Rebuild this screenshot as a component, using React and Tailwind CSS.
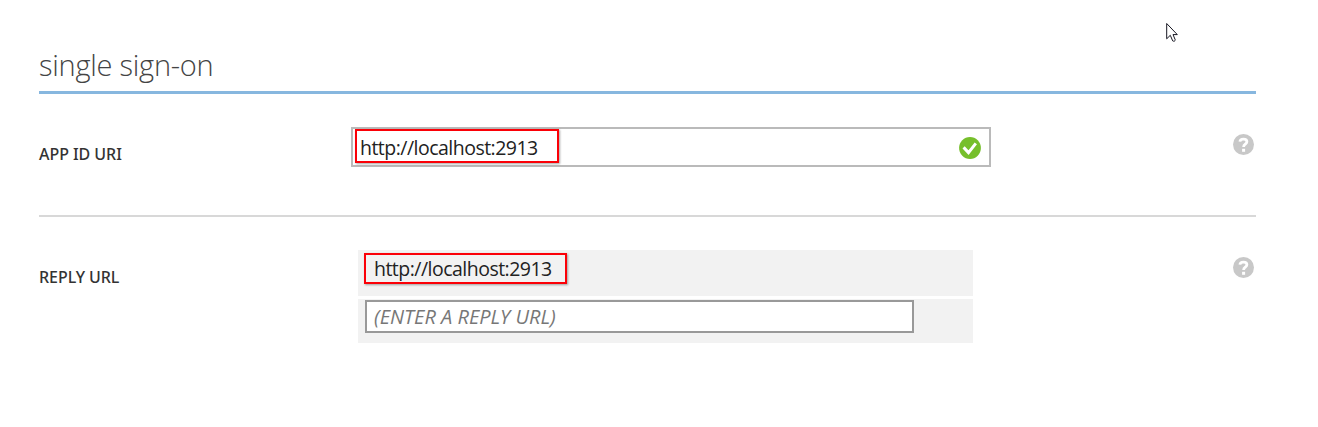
import React from "react";

function HelpIcon() {
  return (
    <svg className="block h-[21px] w-[21px]" viewBox="0 0 21 21" aria-label="Help">
      <circle cx="10.5" cy="10.5" r="10.5" fill="#c8c8c8" />
      <path d="M6.9 7.7C7.1 5.9 8.5 5.1 10.4 5.1c2.1 0 3.5 1 3.5 2.7 0 2.5-3.3 2.4-3.3 5.2" fill="none" stroke="#fff" strokeWidth="2.8" />
      <rect x="9.1" y="14.8" width="3" height="3" fill="#fff" />
    </svg>
  );
}

function CheckIcon() {
  return (
    <svg className="block h-[22px] w-[22px]" viewBox="0 0 22 22" aria-label="Valid">
      <circle cx="11" cy="11" r="10.9" fill="#76bf2b" />
      <path d="M4.6 10.4l4.9 5.2 7.3-9.2" fill="none" stroke="#fff" strokeWidth="3" />
    </svg>
  );
}

function Pointer() {
  return (
    <svg className="absolute left-[1166px] top-[22px] h-[21px] w-[14px]" viewBox="0 0 14 21" aria-hidden="true">
      <path d="M.7 1.5v15.3l3.6-3.5 2.4 5.6c1.1.8 2.7.1 2.5-1.2l-2.2-5.1h4.3z" fill="#fff" stroke="#171722" strokeWidth="1" />
    </svg>
  );
}

function Label({ children }) {
  return <div className="h-5 whitespace-nowrap font-['Noto_Sans'] text-[16px] leading-5 font-medium tracking-[-0.05px] text-[#333]">{children}</div>;
}

const highlight = "box-border border-2 border-[#fb0007] shadow-[1px_1px_2px_rgba(0,0,0,0.35)]";

export default function App() {
  return (
    <main className="relative h-[427px] w-[1318px] overflow-hidden bg-white pl-[39px] font-['Open_Sans',sans-serif]">
      <div className="w-[1217px]">
        <header className="h-[94px] border-b-[3px] border-[#87b7df] pt-[45px]">
          <h1 className="h-10 whitespace-nowrap text-[29px] leading-10 font-light tracking-[-0.25px] text-[#444]">single sign-on</h1>
        </header>

        <section className="flex h-[123px] border-b-2 border-[#d8d8d8]">
          <div className="w-[312px] pt-[50px]"><Label>APP ID URI</Label></div>
          <div className="mt-[33px] flex h-10 w-[640px] justify-between border-2 border-[#bababa] pl-[2px] pr-2">
            <div className={`${highlight} h-[34px] w-[204px] pl-[3px]`}>
              <span className="block whitespace-nowrap text-[19.5px] leading-[33px] tracking-[-0.52px] text-[#222]">http://localhost:2913</span>
            </div>
            <div className="pt-2"><CheckIcon /></div>
          </div>
          <div className="ml-auto mr-[2px] pt-10"><HelpIcon /></div>
        </section>

        <section className="flex pt-[33px]">
          <div className="w-[319px] pt-[17px]"><Label>REPLY URL</Label></div>
          <div className="flex w-[615px] flex-col gap-[3px]">
            <div className="h-[46px] bg-[#f2f2f2] pl-[6px] pt-[3px]">
              <div className={`${highlight} h-[31px] w-[203px] pl-2`}>
                <span className="block whitespace-nowrap text-[19.5px] leading-[27px] tracking-[-0.52px] text-[#222]">http://localhost:2913</span>
              </div>
            </div>
            <div className="h-[44px] bg-[#f2f2f2] pl-[7px] pt-px">
              <div className="h-[33px] w-[549px] border-2 border-[#999] bg-white pl-[7px]">
                <span className="block whitespace-nowrap text-[20px] leading-[30px] italic text-[#777]">(ENTER A REPLY URL)</span>
              </div>
            </div>
          </div>
          <div className="ml-auto mr-[2px] pt-[7px]"><HelpIcon /></div>
        </section>
      </div>
      <Pointer />
    </main>
  );
}
